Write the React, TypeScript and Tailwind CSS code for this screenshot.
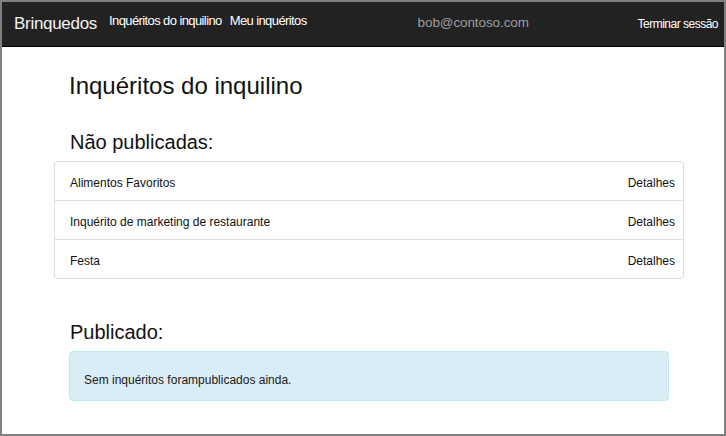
const rows = ['Alimentos Favoritos', 'Inquérito de marketing de restaurante', 'Festa']

export default function App() {
  return (
    <div
      className="w-[726px] h-[436px] border-2 border-[#808080] bg-white overflow-hidden flex flex-col"
      style={{ fontFamily: '"Liberation Sans", Arial, sans-serif' }}
    >
      {/* barra de navegação */}
      <div className="h-[45px] shrink-0 bg-[#222222] border-b border-black flex items-center text-white">
        <span className="ml-[12px] text-[17px] tracking-[-0.3px] text-[#f2f2f2]">Brinquedos</span>
        <span className="ml-[12px] text-[13px] tracking-[-0.6px] -mt-[6px]">Inquéritos do inquilino</span>
        <span className="ml-[8px] text-[13px] tracking-[-0.6px] -mt-[6px]">Meu inquéritos</span>
        <span className="ml-[111px] text-[13.5px] tracking-[-0.1px] text-[#9d9d9d] -mt-[1px]">bob@contoso.com</span>
        <span className="ml-auto mr-[6px] text-[12px] tracking-[-0.5px]">Terminar sessão</span>
      </div>

      {/* conteúdo */}
      <div className="ml-[52px] w-[630px] text-[#111]">
        <h1 className="mt-[26px] ml-[15px] text-[24px] leading-[26px]">Inquéritos do inquilino</h1>
        <h2 className="mt-[32px] ml-[16px] text-[20px] leading-[22px]">Não publicadas:</h2>
        <div className="mt-[8px] border border-[#dddddd] rounded-[4px]">
          {rows.map((r, i) => (
            <div
              key={r}
              className={`flex items-center justify-between pl-[15px] pr-[8px] pt-[4px] text-[12px] ${i > 0 ? 'border-t border-[#dddddd] h-[39px]' : 'h-[38px]'}`}
            >
              <span>{r}</span>
              <span>Detalhes</span>
            </div>
          ))}
        </div>
        <h2 className="mt-[42px] ml-[16px] text-[20px] leading-[22px]">Publicado:</h2>
        <div className="mt-[8px] ml-[15px] w-[600px] h-[50px] bg-[#d9edf7] border border-[#bce8f1] rounded-[4px] flex items-center pl-[14px] pt-[8px] text-[12px] text-[#1a1a1a]">
          Sem inquéritos forampublicados ainda.
        </div>
      </div>
    </div>
  )
}
